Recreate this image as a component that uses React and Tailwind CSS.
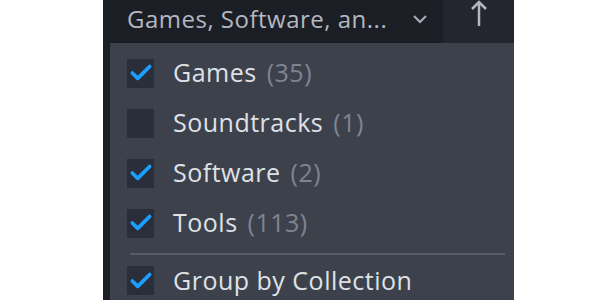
import { Check } from 'lucide-react';

const items = [
  { label: 'Games', count: 35, on: true },
  { label: 'Soundtracks', count: 1, on: false },
  { label: 'Software', count: 2, on: true },
  { label: 'Tools', count: 113, on: true },
];

const Box = ({ on }) => (
  <div className="w-[27px] h-[29px] bg-[#2a2e3a] flex items-center justify-center shrink-0">
    {on && <Check size={26} strokeWidth={3.4} className="text-[#1a9fff]" />}
  </div>
);

export default function App() {
  return (
    <div className="w-[600px] h-[300px] bg-white flex overflow-hidden" style={{ fontFamily: '"Open Sans", sans-serif' }}>
      <div className="ml-[103px] w-[411px] h-[300px] flex flex-col">
        {/* top bar */}
        <div className="h-[43px] flex shrink-0">
          <div className="flex-1 bg-[#1c1e25] flex items-center pl-[24px] pr-[15px] pb-[6px]">
            <span className="text-[24px] font-medium text-[#b4b8c1] tracking-[0.5px] whitespace-nowrap">Games, Software, an...</span>
            <svg className="ml-auto" width="16" height="10" viewBox="0 0 16 10">
              <path d="M2 2 L8 8 L14 2" fill="none" stroke="#a9adb6" strokeWidth="2" />
            </svg>
          </div>
          <div className="w-[71px] bg-[#23262e] flex justify-center">
            <svg width="18" height="28" viewBox="0 0 18 28">
              <path d="M9 26 V2 M2 9 L9 2 L16 9" fill="none" stroke="#b4b8c1" strokeWidth="2.5" />
            </svg>
          </div>
        </div>

        {/* menu */}
        <div className="flex-1 flex">
          <div className="w-[7px] bg-[#1c1e25]" />
          <div className="flex-1 bg-[#3d414c] pl-[17px] pr-[9px] pt-[9px]">
            {items.map((it) => (
              <div key={it.label} className="h-[50px] flex items-center gap-[19px] pb-[8px]">
                <Box on={it.on} />
                <span className="text-[25px] font-medium tracking-[0.5px] text-[#dfe1e6] whitespace-nowrap">
                  {it.label}
                  <span className="ml-[10px] text-[#7f8491]">({it.count})</span>
                </span>
              </div>
            ))}
            <div className="h-[2px] bg-[#565b68] mt-[1px] ml-[3px]" />
            <div className="flex items-center gap-[19px] pt-[11px]">
              <Box on />
              <span className="text-[25px] font-medium tracking-[0.5px] text-[#dfe1e6] whitespace-nowrap leading-[29px]">Group by Collection</span>
            </div>
          </div>
        </div>
      </div>
    </div>
  );
}
